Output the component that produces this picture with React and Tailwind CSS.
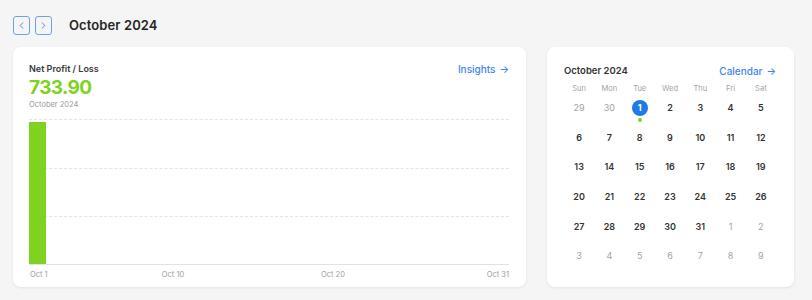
import { ChevronLeft, ChevronRight } from 'lucide-react';

const weekDays = ['Sun', 'Mon', 'Tue', 'Wed', 'Thu', 'Fri', 'Sat'];

// 6 weeks shown, Sep 29 .. Nov 9
const buildDays = () => {
  const days = [{ n: 29, cur: false }, { n: 30, cur: false }];
  for (let i = 1; i <= 31; i++) days.push({ n: i, cur: true });
  for (let i = 1; i <= 9; i++) days.push({ n: i, cur: false });
  return days;
};

export default function App() {
  const days = buildDays();

  return (
    <div
      className="min-h-[300px] bg-[#f5f5f5] px-[13px] pt-[16px] text-[#2b2b2b]"
      style={{ fontFamily: 'Inter, "Open Sans", sans-serif' }}
    >
      {/* Header */}
      <div className="flex items-center h-[19px]">
        <button className="w-[17px] h-[19px] flex items-center justify-center border border-[#6aa3f2] rounded-[3px] text-[#3d86ef]">
          <ChevronLeft size={11} strokeWidth={2} />
        </button>
        <button className="ml-[5px] w-[17px] h-[19px] flex items-center justify-center border border-[#6aa3f2] rounded-[3px] text-[#3d86ef]">
          <ChevronRight size={11} strokeWidth={2} />
        </button>
        <h1 className="ml-[17px] text-[13px] font-semibold tracking-[0.1px] text-[#262626]">October 2024</h1>
      </div>

      <div className="flex mt-[12px] gap-[21px]">
        {/* Net profit card */}
        <div className="w-[513px] h-[240px] bg-white rounded-[8px] shadow-[0_1px_3px_rgba(0,0,0,0.08)] pl-[16px] pr-[17px] pt-[16px]">
          <div className="flex justify-between items-start">
            <div>
              <p className="text-[9px] font-semibold text-[#3a3a3a] leading-[12px]">Net Profit / Loss</p>
              <p className="text-[19px] font-bold tracking-[-0.6px] text-[#7ed321] leading-[24px] mt-[1px]">733.90</p>
              <p className="text-[7.5px] text-[#9a9a9a] leading-[10px]">October 2024</p>
            </div>
            <a className="text-[10px] font-medium text-[#3d86ef] leading-[12px] flex items-center gap-[4px]">
              Insights <span className="text-[10px]">→</span>
            </a>
          </div>

          {/* Chart */}
          <div className="grid mt-[9px] h-[146px]">
            <div className="col-start-1 row-start-1 flex flex-col">
              <div className="h-[48.5px] border-t border-dashed border-[#e4e4e4]" />
              <div className="h-[48.5px] border-t border-dashed border-[#e4e4e4]" />
              <div className="flex-1 border-t border-b border-dashed border-t-[#e4e4e4] border-b-[#e2e2e2] [border-bottom-style:solid]" />
            </div>
            <div className="col-start-1 row-start-1 flex items-end pb-[1px]">
              <div className="w-[17px] h-[142px] bg-[#7ed321]" />
            </div>
          </div>
          <div className="relative h-[20px] text-[7.5px] text-[#9e9e9e]">
            <span className="absolute left-[1px] top-[4px]">Oct 1</span>
            <span className="absolute left-[30%] top-[4px] -translate-x-1/2">Oct 10</span>
            <span className="absolute left-[63.33%] top-[4px] -translate-x-1/2">Oct 20</span>
            <span className="absolute right-0 top-[4px]">Oct 31</span>
          </div>
        </div>

        {/* Calendar card */}
        <div className="w-[247px] h-[240px] bg-white rounded-[8px] shadow-[0_1px_3px_rgba(0,0,0,0.08)] pl-[17px] pr-[18px] pt-[18px]">
          <div className="flex justify-between items-center h-[12px]">
            <p className="text-[9.5px] font-semibold text-[#333]">October 2024</p>
            <a className="text-[10px] font-medium text-[#3d86ef] flex items-center gap-[4px]">
              Calendar <span>→</span>
            </a>
          </div>
          <div className="grid grid-cols-7 mt-[6px]">
            {weekDays.map((d) => (
              <div key={d} className="h-[11px] flex items-center justify-center text-[7.5px] text-[#a3a3a3]">
                {d}
              </div>
            ))}
          </div>
          <div className="grid grid-cols-7 mt-[4px]">
            {days.map((d, i) => {
              const today = d.cur && d.n === 1;
              return (
                <div key={i} className="h-[29.6px] flex flex-col items-center pt-[2px]">
                  {today ? (
                    <div className="relative">
                      <div className="w-[16px] h-[16px] rounded-full bg-[#1f7ae8] flex items-center justify-center text-[9px] font-bold text-white">
                        1
                      </div>
                      <div className="absolute left-1/2 -translate-x-1/2 top-[18px] w-[4px] h-[4px] rounded-full bg-[#7ed321]" />
                    </div>
                  ) : (
                    <div
                      className={`h-[16px] flex items-center justify-center text-[9px] ${
                        d.cur ? 'font-semibold text-[#333]' : 'text-[#a3a3a3]'
                      }`}
                    >
                      {d.n}
                    </div>
                  )}
                </div>
              );
            })}
          </div>
        </div>
      </div>
    </div>
  );
}
